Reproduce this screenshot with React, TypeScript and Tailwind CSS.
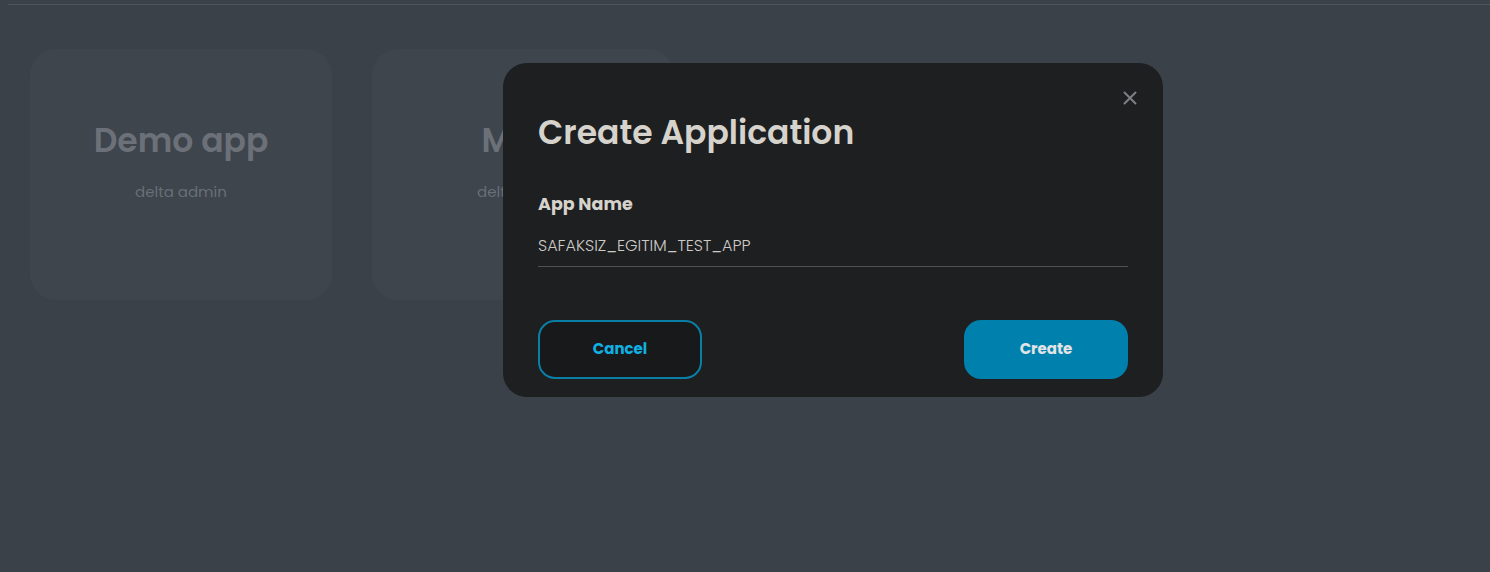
import React from "react";

function Card({ title, sub }: { title: string; sub: string }) {
  return (
    <div className="w-[302px] h-[251px] rounded-[26px] bg-[#3e454d] flex flex-col items-center pt-[72px]">
      <div className="text-[33px] leading-[40px] font-semibold text-[#6c7179]">{title}</div>
      <div className="mt-[21px] text-[15px] leading-[20px] text-[#6a6f76]">{sub}</div>
    </div>
  );
}

export default function App() {
  return (
    <div
      className="relative w-[1490px] h-[572px] bg-[#3b4149] overflow-hidden"
      style={{ fontFamily: "Poppins, 'Open Sans', 'Noto Sans', sans-serif" }}
    >
      <div className="pt-1 pl-2">
        <div className="h-px bg-[#4d565c]" />
      </div>
      <div className="flex gap-10 pl-[30px] pt-[44px]">
        <Card title="Demo app" sub="delta admin" />
        <Card title="Main" sub="delta admin" />
      </div>

      <div className="absolute left-[503px] top-[63px] w-[660px] h-[334px] rounded-[24px] bg-[#1d1f21] px-[35px] pt-[48px]">
        <button className="absolute right-[25px] top-[27px] w-[16px] h-[16px] text-[#7d8084]">
          <svg viewBox="0 0 16 16" width="16" height="16" fill="none" stroke="currentColor" strokeWidth="2" strokeLinecap="round">
            <path d="M2.5 2.5 L13.5 13.5 M13.5 2.5 L2.5 13.5" />
          </svg>
        </button>
        <h2 className="text-[33px] leading-[44px] font-semibold text-[#d6d2cc]">Create Application</h2>
        <div className="mt-[37px] text-[17.5px] leading-[24px] font-bold text-[#d6d2cc]">App Name</div>
        <div className="mt-[20px] pb-[10px] border-b border-[#4c5452] text-[16px] leading-[20px] font-light text-[#cdcac5]">
          SAFAKSIZ_EGITIM_TEST_APP
        </div>
        <div className="mt-[53px] flex justify-between">
          <button className="w-[164px] h-[59px] rounded-[17px] border-2 border-[#0a7fa6] text-[#10b0e2] text-[15px] font-bold bg-[#18191b]">
            Cancel
          </button>
          <button className="w-[164px] h-[59px] rounded-[17px] bg-[#0080ad] text-[#e2e4e6] text-[15px] font-bold">
            Create
          </button>
        </div>
      </div>
    </div>
  );
}
